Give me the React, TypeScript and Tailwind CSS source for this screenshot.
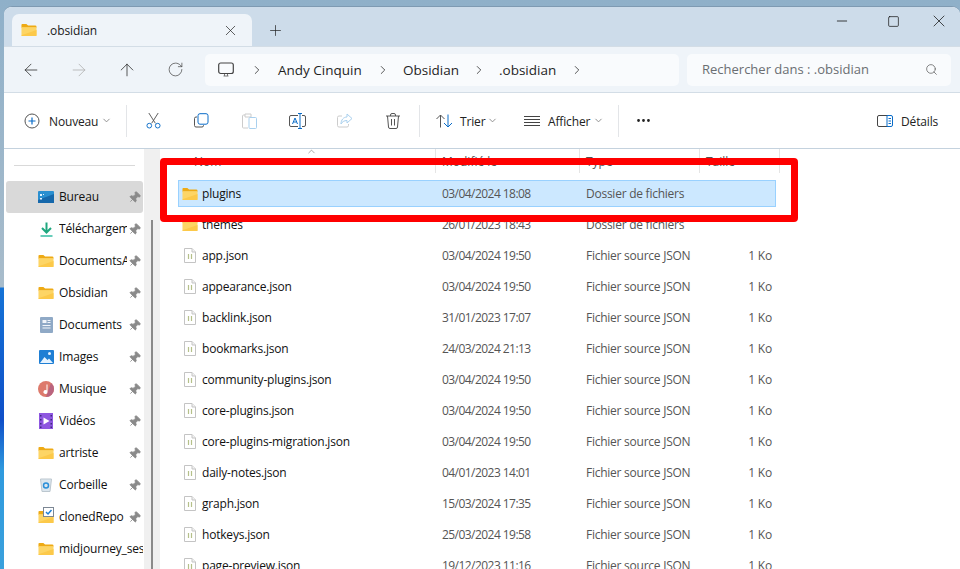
import { ArrowLeft, ArrowRight, ArrowUp, RotateCw, ChevronRight, ChevronDown, ChevronUp, Plus, X, Search, Minus, Square, MoreHorizontal, Pin } from 'lucide-react';

const FolderIcon = () => (
  <svg width="16" height="14" viewBox="0 0 17 14" className="shrink-0">
    <path d="M0.5 1.500a1 1 0 0 1 1-1h4.200l1.800 1.600H15a1.500 1.500 0 0 1 1.500 1.500v1H0.500z" fill="#eeaa14" />
    <path d="M0.500 4h14.800a1.200 1.200 0 0 1 1.200 1.200v7.300a1 1 0 0 1-1 1H1.500a1 1 0 0 1-1-1z" fill="#fdd565" />
    <path d="M0.500 12.500L16.500 7v5.500a1 1 0 0 1-1 1H1.500a1 1 0 0 1-1-1z" fill="#fcc94a" />
  </svg>
);

const JsonIcon = () => (
  <svg width="12" height="15" viewBox="0 0 12 15" className="shrink-0">
    <path d="M0.500 0.500h7.500l3.500 3.500v10.500h-11z" fill="#fff" stroke="#c4c4c4" />
    <path d="M8 0.500v3.500h3.500" fill="#f2f2f2" stroke="#c4c4c4" />
    <path d="M4.500 6v5M7.500 6v5" stroke="#b5c08a" strokeWidth="1.200" />
  </svg>
);

const pinned = [
  { name: 'Bureau', icon: 'bureau', active: true },
  { name: 'Téléchargements', icon: 'download' },
  { name: 'DocumentsAndy', icon: 'folder' },
  { name: 'Obsidian', icon: 'folder' },
  { name: 'Documents', icon: 'docs' },
  { name: 'Images', icon: 'images' },
  { name: 'Musique', icon: 'music' },
  { name: 'Vidéos', icon: 'videos' },
  { name: 'artriste', icon: 'folder' },
  { name: 'Corbeille', icon: 'trash' },
  { name: 'clonedRepo', icon: 'cloned' },
  { name: 'midjourney_sessions', icon: 'folder', nopin: true },
];

const SideIcon = ({ kind }: { kind: string }) => {
  if (kind === 'folder') return <FolderIcon />;
  if (kind === 'bureau')
    return (
      <svg width="16" height="12" viewBox="0 0 16 12" className="shrink-0">
        <rect width="16" height="12" rx="1" fill="#2a8fd0" />
        <path d="M0 12V9L16 3v9z" fill="#1668ab" />
        <path d="M2 3h2v2H2zM2 7h2v1.500H2zM5 3h1v1H5z" fill="#dff2ff" />
      </svg>
    );
  if (kind === 'download')
    return (
      <svg width="13" height="15" viewBox="0 0 13 15" className="shrink-0" fill="none">
        <path d="M6.500 0.500v10M2 6l4.500 4.500L11 6" stroke="#1fa77f" strokeWidth="2" />
        <path d="M0.500 14h12" stroke="#35bda3" strokeWidth="1.600" />
      </svg>
    );
  if (kind === 'docs')
    return (
      <svg width="13" height="16" viewBox="0 0 13 16" className="shrink-0">
        <rect width="13" height="16" rx="1" fill="#8fa9c6" />
        <path d="M2.500 3h4v3h-4zM7.500 3h3v1h-3zM7.500 5h3v1h-3zM2.500 8h8v1h-8zM2.500 10.500h8v1h-8z" fill="#f1f5fa" />
      </svg>
    );
  if (kind === 'images')
    return (
      <svg width="15" height="14" viewBox="0 0 15 14" className="shrink-0">
        <rect width="15" height="14" rx="1" fill="#1f7fd4" />
        <path d="M1 13l4.500-6 3 3 1.500-1.500 4 4.500z" fill="#e6f3ff" />
        <circle cx="10.500" cy="3.500" r="1.500" fill="#e6f3ff" />
      </svg>
    );
  if (kind === 'music')
    return (
      <svg width="16" height="16" viewBox="0 0 16 16" className="shrink-0">
        <circle cx="8" cy="8" r="8" fill="#dd7a6c" />
        <path d="M8 16a8 8 0 0 0 8-8 8 8 0 0 0-3-6z" fill="#b9647f" />
        <path d="M8.500 3.500h1v7.500a2 2 0 1 1-1-1.700z" fill="#fff" />
      </svg>
    );
  if (kind === 'videos')
    return (
      <svg width="14" height="16" viewBox="0 0 14 16" className="shrink-0">
        <rect width="14" height="16" fill="#8e57e0" />
        <path d="M4.500 4.500l6 3.500-6 3.500z" fill="#fff" />
        <path d="M1 2h1.500v1.500H1zM1 6h1.500v1.500H1zM1 10h1.500v1.500H1zM1 13.500h1.500V15H1zM11.500 2H13v1.500h-1.500zM11.500 6H13v1.500h-1.500zM11.500 10H13v1.500h-1.500zM11.500 13.500H13V15h-1.500z" fill="#3f2a80" />
      </svg>
    );
  if (kind === 'trash')
    return (
      <svg width="12" height="14" viewBox="0 0 12 14" className="shrink-0">
        <path d="M0.500 1l1.500 12.500h8L11.500 1z" fill="#dce6ee" stroke="#bcc7cf" />
        <circle cx="6" cy="7.500" r="2.500" fill="none" stroke="#2b8fd8" strokeWidth="1.500" />
      </svg>
    );
  return (
    <div className="relative shrink-0">
      <FolderIcon />
      <svg width="11" height="10" viewBox="0 0 11 10" className="absolute left-[5px] top-[-3px]">
        <rect x="0.500" y="0.500" width="10" height="9" fill="#fff" stroke="#7c8794" />
        <path d="M3 5l2 2 3.500-4" fill="none" stroke="#1f7fd4" strokeWidth="1.500" />
      </svg>
    </div>
  );
};

const files = [
  { name: 'plugins', date: '03/04/2024 18:08', type: 'Dossier de fichiers', size: '', folder: true, selected: true },
  { name: 'themes', date: '26/01/2023 18:43', type: 'Dossier de fichiers', size: '', folder: true },
  { name: 'app.json', date: '03/04/2024 19:50', type: 'Fichier source JSON', size: '1 Ko' },
  { name: 'appearance.json', date: '03/04/2024 19:50', type: 'Fichier source JSON', size: '1 Ko' },
  { name: 'backlink.json', date: '31/01/2023 17:07', type: 'Fichier source JSON', size: '1 Ko' },
  { name: 'bookmarks.json', date: '24/03/2024 21:13', type: 'Fichier source JSON', size: '1 Ko' },
  { name: 'community-plugins.json', date: '03/04/2024 19:50', type: 'Fichier source JSON', size: '1 Ko' },
  { name: 'core-plugins.json', date: '03/04/2024 19:50', type: 'Fichier source JSON', size: '1 Ko' },
  { name: 'core-plugins-migration.json', date: '03/04/2024 19:50', type: 'Fichier source JSON', size: '1 Ko' },
  { name: 'daily-notes.json', date: '04/01/2023 14:01', type: 'Fichier source JSON', size: '1 Ko' },
  { name: 'graph.json', date: '15/03/2024 17:35', type: 'Fichier source JSON', size: '1 Ko' },
  { name: 'hotkeys.json', date: '25/03/2024 19:58', type: 'Fichier source JSON', size: '1 Ko' },
  { name: 'page-preview.json', date: '19/12/2023 11:16', type: 'Fichier source JSON', size: '1 Ko' },
];

const Crumb = ({ label, w }: { label: string; w: string }) => (
  <div className="flex items-center">
    <span className={`${w} pt-px text-[13.5px] text-[#1f1f1f]`}>{label}</span>
    <ChevronRight size={14} strokeWidth={1.300} className="text-[#222]" />
  </div>
);

const ToolIcon = ({ children }: { children: React.ReactNode }) => (
  <div className="w-[48px] h-[32px] flex items-center justify-center">{children}</div>
);

const Sep = () => <div className="w-px h-[32px] bg-[#e3e5e8]" />;

export default function App() {
  return (
    <div
      className="h-[569px] w-[960px] overflow-hidden bg-[linear-gradient(to_bottom,#8fb0c9_0px,#a8bccb_287px,#1573d6_288px,#0f4fc8_420px,#2f9ade_470px,#3aa0dc_569px)] pl-[4px] pt-[6px]"
      style={{ fontFamily: '"Open Sans", "Noto Sans", sans-serif' }}
    >
      <div className="h-[563px] w-[956px] rounded-t-[8px] overflow-hidden bg-white flex flex-col relative border-t border-[#7e9ab2]">
        {/* tab strip */}
        <div className="h-[39px] shrink-0 bg-[#cddcea] flex items-end pl-[8px]">
          <div className="w-[240px] h-[32px] bg-[#eff4f9] rounded-t-[7px] flex items-center pl-[9px] pr-[13px]">
            <FolderIcon />
            <span className="ml-[10px] pt-px text-[12px] tracking-[-0.1px] text-[#1a1a1a] font-medium flex-1">.obsidian</span>
            <X size={17} strokeWidth={1} className="text-[#222]" />
          </div>
          <div className="w-[46px] h-[32px] flex items-center justify-center">
            <Plus size={17} strokeWidth={1} className="text-[#222]" />
          </div>
          <div className="flex-1 self-start h-[28px] flex items-center justify-end">
            <Minus size={16} strokeWidth={1.200} className="text-[#111] mr-[37px] ml-auto" />
            <Square size={13} strokeWidth={1.300} className="text-[#111] mr-[29px]" />
            <X size={20} strokeWidth={0.900} className="text-[#111] mr-[11px]" />
          </div>
        </div>

        {/* nav bar */}
        <div className="h-[47px] shrink-0 bg-[#eff4f9] border-t border-b border-[#d3dde6] flex items-center">
          <div className="w-[201px] flex items-center pl-[3px]">
            <div className="w-[48px] flex justify-center"><ArrowLeft size={20} strokeWidth={0.900} className="text-[#222]" /></div>
            <div className="w-[48px] flex justify-center"><ArrowRight size={20} strokeWidth={0.900} className="text-[#aaa]" /></div>
            <div className="w-[48px] flex justify-center"><ArrowUp size={20} strokeWidth={0.900} className="text-[#222]" /></div>
            <div className="w-[48px] flex justify-center"><RotateCw size={17} strokeWidth={1} className="text-[#444]" /></div>
          </div>
          <div className="w-[474px] h-[32px] bg-[#f9fbfd] rounded-[5px] flex items-center pl-[13px]">
            <svg width="16" height="16" viewBox="0 0 16 16" fill="none" className="mr-[16px] mt-px">
              <rect x="0.700" y="1" width="14.600" height="10.500" rx="2" stroke="#444" strokeWidth="1.200" />
              <path d="M5.500 14h5M6.500 12v2M9.500 12v2" stroke="#777" />
            </svg>
            <div className="w-[14px] mr-[14px] flex items-center"><ChevronRight size={14} strokeWidth={1.300} className="text-[#222]" /></div>
            <Crumb label="Andy Cinquin" w="w-[98px]" />
            <div className="w-[13px]" />
            <Crumb label="Obsidian" w="w-[69px]" />
            <div className="w-[13px]" />
            <Crumb label=".obsidian" w="w-[71px]" />
          </div>
          <div className="w-[264px] ml-[8px] h-[32px] bg-[#f9fbfd] rounded-[5px] flex items-center pl-[15px] pr-[13px]">
            <span className="flex-1 pt-px text-[13px] text-[#6a6e72]">Rechercher dans : .obsidian</span>
            <Search size={13} strokeWidth={1.300} className="text-[#555]" />
          </div>
        </div>

        {/* toolbar */}
        <div className="h-[56px] shrink-0 bg-white border-b border-[#c4d2de] flex items-center pl-[20px] text-[12px] tracking-[-0.15px] text-[#222]">
          <svg width="16" height="16" viewBox="0 0 16 16" fill="none">
            <circle cx="8" cy="8" r="7" stroke="#555" />
            <path d="M8 4.500v7M4.500 8h7" stroke="#0a6cc8" strokeWidth="1.200" />
          </svg>
          <span className="ml-[9px] pt-[2px] w-[52px]">Nouveau</span>
          <ChevronDown size={11} className="text-[#888]" />
          <div className="w-[14px]" />
          <Sep />
          <div className="w-[2px]" />
          <ToolIcon>
            <svg width="15" height="17" viewBox="0 0 16 17" fill="none">
              <path d="M3 0.500l7 11M13 0.500l-7 11" stroke="#555" />
              <circle cx="3.500" cy="14" r="2.500" stroke="#0a6cc8" />
              <circle cx="12.500" cy="14" r="2.500" stroke="#0a6cc8" />
            </svg>
          </ToolIcon>
          <ToolIcon>
            <svg width="15" height="15" viewBox="0 0 15 15" fill="none">
              <path d="M3 4H2a1.500 1.500 0 0 0-1.500 1.500v7A1.500 1.500 0 0 0 2 14h6a1.500 1.500 0 0 0 1.500-1.500V12" stroke="#555" />
              <rect x="4" y="0.700" width="10" height="10.500" rx="2" stroke="#0a6cc8" />
            </svg>
          </ToolIcon>
          <ToolIcon>
            <svg width="15" height="16" viewBox="0 0 15 16" fill="none">
              <path d="M3 2H1.500A1 1 0 0 0 .5 3v11a1 1 0 0 0 1 1H6M3 1h6v3H3z" stroke="#ccc" />
              <rect x="7" y="4.500" width="7.500" height="11" rx="1" stroke="#a9d0ee" />
            </svg>
          </ToolIcon>
          <ToolIcon>
            <svg width="17" height="16" viewBox="0 0 17 16" fill="none">
              <path d="M9 2.500H2a1.500 1.500 0 0 0-1.500 1.500v8A1.500 1.500 0 0 0 2 13.500h7M13 2.500h2A1.500 1.500 0 0 1 16.500 4v8a1.500 1.500 0 0 1-1.500 1.500h-2" stroke="#555" />
              <path d="M11 .5v15M9 .5h4M9 15.500h4" stroke="#0a6cc8" />
              <path d="M3.500 11l2.500-6 2.500 6M4.500 9h3" stroke="#0a6cc8" />
            </svg>
          </ToolIcon>
          <ToolIcon>
            <svg width="16" height="15" viewBox="0 0 16 15" fill="none">
              <path d="M5 3H2a1.500 1.500 0 0 0-1.500 1.500v8A1.500 1.500 0 0 0 2 14h8a1.500 1.500 0 0 0 1.500-1.500V11" stroke="#ccc" />
              <path d="M10 1l5 4.500L10 10V7.500C7 7.500 5 9 4 11c0-4 2.500-7 6-7z" stroke="#a9d0ee" />
            </svg>
          </ToolIcon>
          <ToolIcon>
            <svg width="14" height="16" viewBox="0 0 14 16" fill="none" stroke="#555">
              <path d="M0 3h14M4.500 3V2A1.500 1.500 0 0 1 6 .5h2A1.500 1.500 0 0 1 9.500 2v1M1.500 3l1 11a1.500 1.500 0 0 0 1.500 1.500h6a1.500 1.500 0 0 0 1.500-1.500l1-11M5.500 6v6.500M8.500 6v6.500" />
            </svg>
          </ToolIcon>
          <div className="w-[2px]" />
          <Sep />
          <svg width="17" height="14" viewBox="0 0 17 14" fill="none" className="ml-[16px]">
            <path d="M4.500 13.500V1M.5 5l4-4 4 4" stroke="#555" />
            <path d="M12 .5V13M8 9l4 4 4-4" stroke="#0a6cc8" />
          </svg>
          <span className="ml-[7px] pt-[2px] w-[27px]">Trier</span>
          <ChevronDown size={11} className="text-[#888]" />
          <svg width="16" height="10" viewBox="0 0 16 10" fill="none" stroke="#444" className="ml-[26px]">
            <path d="M0 .5h16M0 3.500h16M0 6.500h16M0 9.500h16" />
          </svg>
          <span className="ml-[8px] pt-[2px] w-[45px]">Afficher</span>
          <ChevronDown size={11} className="text-[#888]" />
          <div className="w-[14px]" />
          <Sep />
          <MoreHorizontal size={17} strokeWidth={2} className="text-[#222] ml-[16px]" />
          <div className="flex-1" />
          <svg width="16" height="12" viewBox="0 0 16 12" fill="none">
            <path d="M10 .5H2A1.500 1.500 0 0 0 .5 2v8A1.500 1.500 0 0 0 2 11.500h8" stroke="#444" />
            <path d="M10 .5h4A1.500 1.500 0 0 1 15.500 2v8a1.500 1.500 0 0 1-1.500 1.500h-4z" stroke="#0a6cc8" />
            <path d="M11.500 3.500h2.500M11.500 6h2.500M11.500 8.500h2.500" stroke="#0a6cc8" />
          </svg>
          <span className="ml-[8px] pt-[2px] mr-[23px] w-[36px] whitespace-nowrap">Détails</span>
        </div>

        {/* body */}
        <div className="flex-1 flex min-h-0 relative">
          <div className="w-[140px] shrink-0 bg-white pt-[16px] overflow-hidden">
            <div className="mx-[10px] h-px bg-[#d9d9d9] w-[121px]" />
            <div className="mt-[15px] pl-[2px]">
              {pinned.map((p) => (
                <div
                  key={p.name}
                  className={`h-[32px] w-[137px] flex items-center rounded-[3px] ${p.active ? 'bg-[#d9d9d9]' : ''}`}
                >
                  <div className="ml-[32px] mr-[5px] w-[16px] flex justify-center shrink-0">
                    <SideIcon kind={p.icon} />
                  </div>
                  <span className={`text-[12px] tracking-[-0.15px] text-[#111] whitespace-nowrap overflow-hidden ${p.nopin ? 'w-[84px]' : 'w-[68px]'}`}>
                    {p.name}
                  </span>
                  {!p.nopin && (
                    <Pin size={13} fill="#8a8a8a" strokeWidth={1.500} className="text-[#8a8a8a] rotate-45 ml-px" />
                  )}
                </div>
              ))}
            </div>
          </div>
          <div className="w-[16px] shrink-0 bg-[#f0f0f0] pt-[71px] pl-[7px]">
            <div className="w-[2px] h-full bg-[#8a8a8a]" />
          </div>
          <div className="flex-1 bg-white text-[12px] text-[#111] pl-[14px]">
            <div className="h-[24px] flex relative text-[#555]">
              <ChevronUp size={11} strokeWidth={1.200} className="absolute left-[132px] top-[-3px] text-[#666]" />
              <div className="w-[262px] pl-[20px] pt-[4px] border-r border-[#e5e5e5]">Nom</div>
              <div className="w-[144px] pl-[6px] pt-[4px] border-r border-[#e5e5e5]">Modifié le</div>
              <div className="w-[120px] pl-[6px] pt-[4px] border-r border-[#e5e5e5]">Type</div>
              <div className="w-[80px] pl-[6px] pt-[4px] border-r border-[#e5e5e5]">Taille</div>
            </div>
            <div className="mt-[5px]">
              {files.map((f) => (
                <div key={f.name} className="h-[31px] flex items-center w-[598px] ml-[4px]">
                  <div className={`h-[27px] w-full flex items-center border ${f.selected ? 'bg-[#cce8ff] border-[#99d1ff]' : 'border-transparent'}`}>
                    <div className="w-[23px] pl-[3px] shrink-0">
                      <div className="w-[16px] flex justify-center">
                        {f.folder ? <FolderIcon /> : <JsonIcon />}
                      </div>
                    </div>
                    <div className="w-[240px] shrink-0 tracking-[-0.2px] whitespace-nowrap">{f.name}</div>
                    <div className="w-[144px] shrink-0 tracking-[-0.55px] text-[#555]">{f.date}</div>
                    <div className="w-[150px] shrink-0 tracking-[-0.25px] text-[#555]">{f.type}</div>
                    <div className="w-[36px] text-right tracking-[-0.2px] text-[#555]">{f.size}</div>
                  </div>
                </div>
              ))}
            </div>
          </div>
          {/* red highlight drawn over the list */}
          <div className="absolute left-[156px] top-[9px] w-[638px] h-[64px] border-[7px] border-[#ff0000] rounded-[4px]" />
        </div>
      </div>
    </div>
  );
}
